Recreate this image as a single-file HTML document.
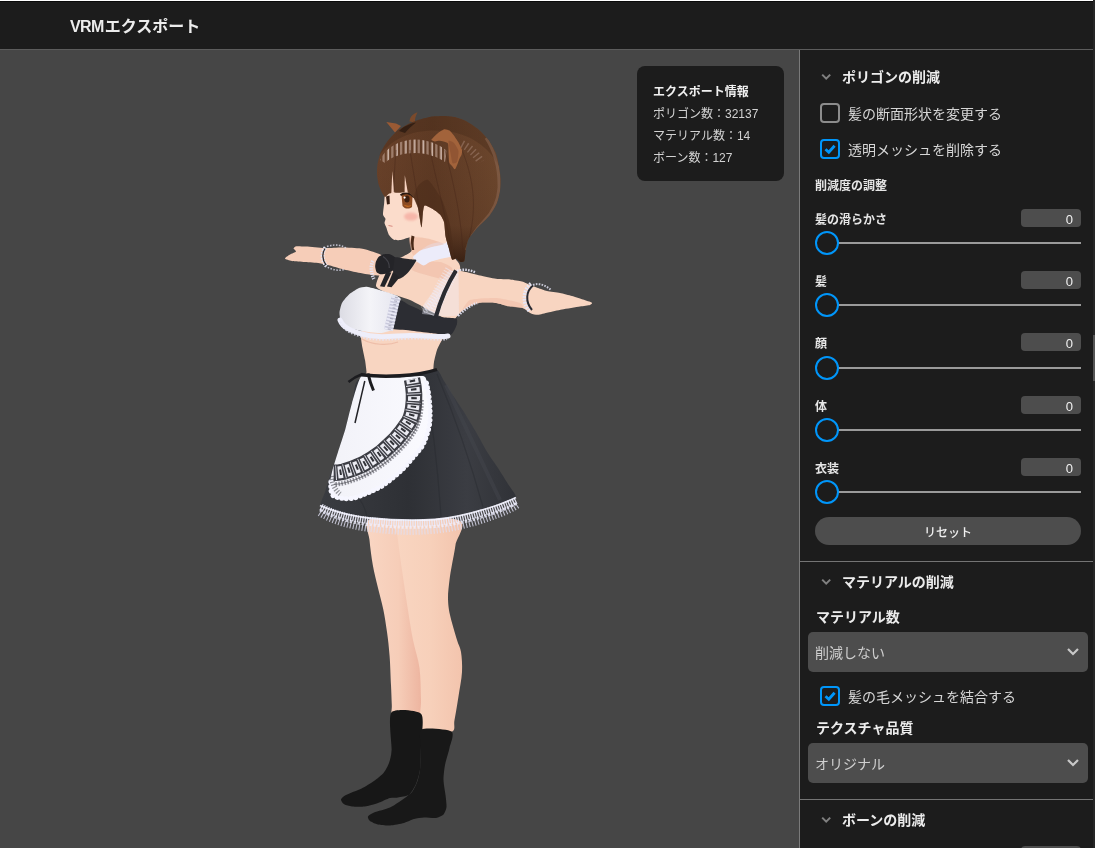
<!DOCTYPE html>
<html lang="ja">
<head>
<meta charset="utf-8">
<title>VRMエクスポート</title>
<style>
*{box-sizing:border-box;margin:0;padding:0}
html,body{width:1095px;height:848px;overflow:hidden;background:#464646}
body{position:relative;will-change:transform;font-family:"Liberation Sans","Noto Sans CJK JP",sans-serif;color:#e6e6e6;-webkit-font-smoothing:antialiased}
.abs{position:absolute}
#topline{left:0;top:0;width:1093px;height:1px;background:#fff}
#topdark{left:0;top:1px;width:1093px;height:1px;background:#0a0a0a}
#header{left:0;top:2px;width:1093px;height:47px;background:#1c1c1c}
#hborder{left:0;top:49px;width:1093px;height:1px;background:#5c5c5c}
#title{left:70px;top:15px;font-size:16px;font-weight:700;line-height:24px;color:#ececec;white-space:nowrap}
#viewport{left:0;top:50px;width:799px;height:798px;background:#464646;overflow:hidden}
#edge{left:1093px;top:0;width:2px;height:848px;background:#262626}
#thumb{left:1093px;top:335px;width:2px;height:46px;background:#555}
#panel{left:799px;top:50px;width:294px;height:798px;background:#1c1c1c;border-left:1px solid #7a7a7a;overflow:hidden}
#info{left:637px;top:66px;width:147px;height:115px;border-radius:8px;background:#1c1c1c;padding:15px 16px;font-size:12px;line-height:22px;color:#d2d2d2;white-space:nowrap}
#info b{color:#f0f0f0;font-weight:700}
/* panel items use page coordinates via absolute children of body */
.sec{font-size:14px;font-weight:700;line-height:20px;color:#ececec;white-space:nowrap}
.chev{width:12px;height:8px}
.cb{width:20px;height:20px;border:2px solid #8c8c8c;border-radius:4px}
.cb.on{border-color:#0096fa}
.lbl{font-size:14px;line-height:20px;color:#d6d6d6;white-space:nowrap}
.h14{font-size:14px;font-weight:700;line-height:20px;color:#ececec;white-space:nowrap}
.h12{font-size:12px;font-weight:700;line-height:18px;color:#e6e6e6;white-space:nowrap}
.val{left:1021px;width:60px;height:18px;border-radius:4px;background:#4d4d4d;font-size:13px;line-height:22px;text-align:right;padding-right:8px;color:#f0f0f0}
.track{left:838px;width:243px;height:2px;background:#9a9a9a}
.knob{left:815px;width:24px;height:24px;border-radius:50%;border:2px solid #0096fa;background:#1c1c1c}
.div{left:800px;width:293px;height:1px;background:#747474}
.dd{left:808px;width:280px;height:40px;border-radius:5px;background:#4d4d4d;font-size:14px;line-height:42px;padding-left:7px;color:#cfcfcf;white-space:nowrap}
#reset{left:815px;top:517px;width:266px;height:28px;border-radius:14px;background:#4d4d4d;font-size:12px;font-weight:500;line-height:32px;text-align:center;color:#f0f0f0}
</style>
</head>
<body>
<div class="abs" id="viewport">
<!--CHARACTER-->
<svg class="abs" style="left:0;top:0;width:799px;height:798px" viewBox="0 50 799 798">
<defs>
<linearGradient id="gHair" x1="0" y1="0" x2="1" y2="0"><stop offset="0" stop-color="#6a422a"/><stop offset=".45" stop-color="#5e3a24"/><stop offset="1" stop-color="#6e482e"/></linearGradient>
<linearGradient id="gHairV" x1="0" y1="0" x2="0" y2="1"><stop offset="0" stop-color="#4a2c1a" stop-opacity=".0"/><stop offset=".75" stop-color="#3a2012" stop-opacity=".15"/><stop offset="1" stop-color="#2a160c" stop-opacity=".75"/></linearGradient>
<linearGradient id="gSkinLeg" x1="0" y1="0" x2="1" y2="0"><stop offset="0" stop-color="#f9d6c2"/><stop offset=".55" stop-color="#f7d0ba"/><stop offset="1" stop-color="#f3c4ad"/></linearGradient>
<linearGradient id="gSkinLegB" x1="0" y1="0" x2="1" y2="0"><stop offset="0" stop-color="#f9d6c3"/><stop offset=".55" stop-color="#f6cdb8"/><stop offset="1" stop-color="#ecb19c"/></linearGradient>
<linearGradient id="gSkirt" x1="0" y1="0" x2="1" y2="0"><stop offset="0" stop-color="#3a3c41"/><stop offset=".45" stop-color="#2e3035"/><stop offset=".75" stop-color="#3b3d43"/><stop offset="1" stop-color="#303237"/></linearGradient>
<linearGradient id="gBra" x1="0" y1="0" x2="1" y2="0"><stop offset="0" stop-color="#dcdce4"/><stop offset=".5" stop-color="#f4f4f8"/><stop offset="1" stop-color="#e4e4ee"/></linearGradient>
<linearGradient id="gApron" x1="0" y1="0" x2="1" y2="0"><stop offset="0" stop-color="#f2f2f8"/><stop offset="1" stop-color="#fafaff"/></linearGradient>
<filter id="fb" filterUnits="userSpaceOnUse" x="360" y="100" width="160" height="100"><feGaussianBlur stdDeviation="0.55"/></filter>
<filter id="fb2" filterUnits="userSpaceOnUse" x="395" y="205" width="35" height="25"><feGaussianBlur stdDeviation="1.2"/></filter>
</defs>
<path d="M368.5 520.0 C363.6 523.3 368.8 532.5 369.5 540.0 C370.2 547.5 371.4 557.0 372.8 565.0 C374.2 573.0 376.3 580.7 378.0 588.0 C379.7 595.3 381.7 601.7 383.2 609.0 C384.7 616.3 385.9 624.2 387.0 632.0 C388.1 639.8 388.9 647.2 389.6 656.0 C390.3 664.8 390.6 676.8 391.0 685.0 C391.4 693.2 391.6 699.8 391.8 705.0 C392.1 710.2 390.3 713.8 392.5 716.0 C394.7 718.2 399.9 717.8 405.0 718.0 C410.1 718.2 419.8 719.2 423.0 717.0 C426.2 714.8 424.0 709.5 424.0 705.0 C424.0 700.5 423.2 696.2 423.0 690.0 C422.8 683.8 423.7 676.3 422.5 668.0 C421.3 659.7 417.9 649.8 416.0 640.0 C414.1 630.2 412.6 620.7 410.8 609.0 C409.0 597.3 406.7 582.2 405.0 570.0 C403.3 557.8 401.4 544.3 400.4 536.0 C399.4 527.7 404.3 522.7 399.0 520.0 C393.7 517.3 373.4 516.7 368.5 520.0Z" fill="url(#gSkinLegB)"/>
<path d="M396.0 520.0 C385.8 522.7 396.4 527.7 397.4 536.0 C398.4 544.3 400.3 557.8 402.0 570.0 C403.7 582.2 406.0 597.3 407.8 609.0 C409.6 620.7 411.1 630.2 413.0 640.0 C414.9 649.8 418.2 658.0 419.5 668.0 C420.8 678.0 420.6 689.5 421.0 700.0 C421.4 710.5 416.7 725.7 421.7 731.0 C426.7 736.3 445.5 733.8 451.0 732.0 C456.5 730.2 453.3 725.8 454.5 720.0 C455.7 714.2 457.1 705.0 458.4 697.0 C459.6 689.0 461.6 679.5 462.0 672.0 C462.4 664.5 461.8 657.3 461.0 652.0 C460.2 646.7 458.8 646.2 457.0 640.0 C455.2 633.8 451.5 622.0 450.0 615.0 C448.5 608.0 448.1 603.8 448.0 598.0 C447.9 592.2 448.9 585.5 449.5 580.0 C450.1 574.5 450.9 570.8 451.9 565.0 C452.9 559.2 454.4 552.5 455.5 545.0 C456.6 537.5 468.3 524.2 458.4 520.0 C448.5 515.8 406.2 517.3 396.0 520.0Z" fill="url(#gSkinLeg)"/>
<path d="M391.4 712.5 C394.9 708.3 417.7 710.2 421.2 714.0 C424.7 717.8 421.1 738.5 421.0 745.0 C420.9 751.5 420.6 765.1 420.0 769.6 C419.4 774.1 417.3 781.1 416.0 784.0 C414.7 786.9 411.1 793.2 409.0 794.8 C406.9 796.4 400.2 797.1 398.0 797.5 C395.8 797.9 392.3 797.4 390.0 798.0 C387.7 798.6 380.9 802.0 378.0 803.0 C375.1 804.0 367.8 806.1 364.8 806.5 C361.8 806.9 354.4 806.8 352.0 806.5 C349.6 806.2 345.5 805.1 344.2 804.3 C342.9 803.5 340.8 800.6 341.0 799.5 C341.2 798.4 343.6 796.3 346.0 795.0 C348.4 793.7 358.3 790.1 361.6 788.5 C364.9 786.9 371.4 782.8 374.0 781.0 C376.6 779.2 381.9 774.8 383.7 772.7 C385.4 770.6 388.1 765.6 389.0 763.0 C389.9 760.4 391.3 755.9 391.6 750.0 C391.9 744.1 387.9 716.7 391.4 712.5Z" fill="#171717"/>
<path d="M421.5 729.5 C425.1 727.3 448.2 729.3 451.5 731.5 C454.8 733.7 450.3 744.1 449.5 748.0 C448.7 751.9 445.7 761.3 445.0 765.0 C444.3 768.7 443.4 776.5 443.5 780.0 C443.6 783.5 445.1 791.9 445.5 795.0 C445.9 798.1 446.7 804.7 446.5 807.0 C446.3 809.3 444.7 813.2 443.5 814.5 C442.3 815.8 438.3 817.6 436.0 818.0 C433.7 818.4 426.6 817.4 424.0 817.5 C421.4 817.6 416.3 818.4 414.0 819.0 C411.7 819.6 406.8 822.2 404.0 823.0 C401.2 823.8 393.0 825.3 390.0 825.5 C387.0 825.7 380.3 825.0 378.0 824.5 C375.7 824.0 371.2 821.9 370.0 821.0 C368.8 820.1 367.5 817.5 368.0 816.5 C368.5 815.5 371.4 813.5 374.0 812.5 C376.6 811.5 386.7 809.0 390.0 807.5 C393.3 806.0 399.4 801.8 402.0 800.0 C404.6 798.2 410.4 793.9 412.2 791.7 C414.0 789.5 416.6 783.6 417.5 781.0 C418.4 778.4 419.6 773.2 420.0 769.6 C420.4 766.0 420.8 754.7 421.0 750.0 C421.2 745.3 417.9 731.7 421.5 729.5Z" fill="#181818"/>
<path d="M361.0 336.0 C360.8 338.2 362.1 345.6 362.5 348.0 C362.9 350.4 364.6 357.6 365.0 360.0 C365.4 362.4 366.4 370.0 366.5 372.0 C366.6 374.0 359.2 379.4 366.0 380.0 C372.8 380.6 427.3 378.9 434.0 378.0 C440.7 377.1 433.4 372.6 433.4 371.0 C433.4 369.4 433.6 364.1 434.0 362.0 C434.4 359.9 436.2 352.2 437.0 350.0 C437.8 347.8 441.0 341.7 442.0 340.0 C443.0 338.3 446.5 334.5 447.0 333.0 C447.5 331.5 451.7 326.1 447.0 325.0 C442.3 323.9 408.2 321.9 400.0 322.0 C391.8 322.1 368.9 324.6 365.0 326.0 C361.1 327.4 361.2 333.8 361.0 336.0Z" fill="#f8d5c1"/>
<path d="M284.9 258.6 C284.7 257.8 288.7 255.3 290.0 254.5 C291.3 253.7 295.6 252.2 296.0 251.5 C296.4 250.8 293.4 249.1 293.5 248.5 C293.6 247.9 295.0 246.5 296.5 246.3 C298.0 246.1 302.7 246.4 306.0 246.6 C309.3 246.8 320.3 248.1 324.5 248.2 C328.7 248.3 337.8 247.6 342.0 247.6 C346.2 247.6 357.4 248.1 360.9 248.6 C364.4 249.1 369.5 250.7 372.0 251.5 C374.5 252.3 380.1 254.0 382.0 255.5 C383.9 257.0 387.6 261.7 388.0 264.0 C388.4 266.3 387.0 273.7 385.0 275.0 C383.0 276.3 374.3 275.2 370.8 274.8 C367.3 274.4 358.5 272.7 355.0 272.0 C351.5 271.3 343.9 269.5 341.0 268.8 C338.1 268.1 332.5 266.3 330.0 265.6 C327.5 264.9 322.5 263.6 319.6 263.2 C316.7 262.8 308.2 262.3 305.0 262.0 C301.8 261.7 294.3 261.4 292.0 261.0 C289.7 260.6 285.1 259.4 284.9 258.6Z" fill="#f6cdb8"/>
<path d="M325.5 247.5 C321.5 252 321.5 260 326.5 266" fill="none" stroke="#e8e8f6" stroke-width="4" stroke-dasharray="1.6 1.1"/>
<path d="M325 248.5 C322 253 322 259.5 326 265" fill="none" stroke="#2a2a30" stroke-width="1.3"/>
<path d="M327 246.5 C336 243.5 343 245.5 347 249" fill="none" stroke="#dcdcee" stroke-width="1.6" stroke-dasharray="1.5 1.5" opacity=".8"/>
<path d="M325 266 C332 270 340 271.5 345 269" fill="none" stroke="#dcdcee" stroke-width="1.6" stroke-dasharray="1.5 1.5" opacity=".8"/>
<path d="M452.0 270.5 C454.0 268.7 463.2 271.5 466.0 272.0 C468.8 272.5 477.0 274.8 480.0 275.5 C483.0 276.2 493.0 278.4 496.0 278.8 C499.0 279.2 507.4 279.2 510.0 279.5 C512.6 279.8 520.1 281.0 522.0 281.5 C523.9 282.0 527.4 283.9 529.0 284.5 C530.6 285.1 536.2 287.4 538.0 288.0 C539.8 288.6 544.8 290.5 547.0 291.0 C549.2 291.5 557.5 292.5 560.0 293.0 C562.5 293.5 569.7 295.4 572.0 296.0 C574.3 296.6 581.0 298.8 583.0 299.5 C585.0 300.2 591.3 302.1 592.0 302.7 C592.7 303.2 591.2 304.6 590.0 305.0 C588.8 305.4 582.8 306.1 580.0 306.5 C577.2 306.9 565.2 308.9 562.0 309.5 C558.8 310.1 550.4 312.0 548.0 312.5 C545.6 313.0 539.7 314.7 538.0 314.8 C536.3 314.9 532.5 314.2 531.0 313.5 C529.5 312.8 524.7 308.7 522.5 308.0 C520.3 307.3 511.6 306.8 509.0 306.3 C506.4 305.8 498.7 303.3 496.0 302.9 C493.3 302.5 484.4 302.3 482.0 302.5 C479.6 302.7 474.0 304.1 472.0 305.0 C470.0 305.9 463.7 309.7 462.0 311.0 C460.3 312.3 456.4 317.5 455.0 318.0 C453.6 318.5 448.9 318.8 448.0 316.0 C447.1 313.2 445.6 294.6 446.0 290.0 C446.4 285.4 450.0 272.3 452.0 270.5Z" fill="#f8d5c1"/>
<path d="M470.0 300.0 C473.4 298.7 491.0 297.7 496.0 298.0 C501.0 298.3 517.4 302.0 520.0 303.0 C522.6 304.0 523.6 307.7 522.5 308.0 C521.4 308.3 511.6 306.8 509.0 306.3 C506.4 305.8 498.7 303.3 496.0 302.9 C493.3 302.5 484.4 302.3 482.0 302.5 C479.6 302.7 474.0 304.1 472.0 305.0 C470.0 305.9 462.2 311.5 462.0 311.0 C461.8 310.5 466.6 301.3 470.0 300.0Z" fill="#f0bca6" opacity=".55"/>
<path d="M409.0 232.0 C409.8 230.4 417.7 233.6 420.0 234.0 C422.3 234.4 429.3 235.6 432.0 236.0 C434.7 236.4 444.7 235.8 447.0 238.0 C449.3 240.2 453.7 255.2 455.0 258.0 C456.3 260.8 459.5 262.8 460.0 266.0 C460.5 269.2 460.5 284.6 460.0 290.0 C459.5 295.4 457.0 317.4 455.0 320.0 C453.0 322.6 444.5 318.0 440.0 316.0 C435.5 314.0 415.5 302.4 410.0 300.0 C404.5 297.6 388.4 293.4 385.0 292.0 C381.6 290.6 376.4 288.0 376.0 286.0 C375.6 284.0 379.4 274.4 381.0 272.0 C382.6 269.6 389.7 263.6 392.0 262.0 C394.3 260.4 402.0 257.2 404.0 256.0 C406.0 254.8 411.5 252.4 412.0 250.0 C412.5 247.6 408.2 233.6 409.0 232.0Z" fill="#f8d5c1"/>
<path d="M418.0 262.0 C420.8 261.2 436.6 261.4 440.0 262.0 C443.4 262.6 451.0 266.2 452.0 268.0 C453.0 269.8 452.2 279.2 450.0 280.0 C447.8 280.8 433.8 277.0 430.0 276.0 C426.2 275.0 413.2 271.4 412.0 270.0 C410.8 268.6 415.2 262.8 418.0 262.0Z" fill="#eeb8a2" opacity=".5"/>
<path d="M339.5 312.5 C339.6 310.7 341.1 304.8 342.0 303.0 C342.9 301.2 347.4 295.9 349.0 294.5 C350.6 293.1 356.3 289.3 358.0 288.5 C359.7 287.7 364.2 286.8 366.0 286.8 C367.8 286.9 373.8 288.4 376.0 289.0 C378.2 289.6 385.9 291.8 388.0 292.5 C390.1 293.2 396.2 295.1 397.5 296.0 C398.8 296.9 401.1 299.0 401.0 301.0 C400.9 303.0 396.9 313.1 396.0 316.0 C395.1 318.9 394.1 327.8 392.5 329.5 C390.9 331.2 383.1 332.9 380.0 333.0 C376.9 333.1 365.3 331.6 362.0 331.0 C358.7 330.4 349.1 328.0 347.0 327.0 C344.9 326.0 341.8 322.4 341.0 321.0 C340.2 319.6 339.4 314.3 339.5 312.5Z" fill="url(#gBra)"/>
<path d="M400.2 300.5 C401.3 299.5 406.7 303.9 408.0 304.5 C409.3 305.1 414.7 307.4 416.0 308.0 C417.3 308.6 422.6 311.2 424.0 311.8 C425.4 312.4 430.9 314.7 432.6 315.2 C434.4 315.7 443.0 317.2 445.0 317.5 C447.0 317.8 455.5 318.0 456.5 318.5 C457.5 319.0 457.2 323.0 457.0 324.0 C456.8 325.0 455.0 329.1 454.5 330.0 C454.0 330.9 452.2 334.1 451.0 334.5 C449.8 334.9 441.8 334.3 440.0 334.2 C438.2 334.1 432.5 333.3 430.0 333.0 C427.5 332.7 413.2 330.9 410.0 330.5 C406.8 330.1 392.3 329.8 391.0 328.6 C389.7 327.4 393.7 318.3 394.5 316.0 C395.3 313.7 399.1 301.5 400.2 300.5Z" fill="#2c2d33"/>
<path d="M396 297 L388.5 330" fill="none" stroke="#c9c9dc" stroke-width="9"/>
<path d="M396 297 L388.5 330" fill="none" stroke="#f2f2fc" stroke-width="9" stroke-dasharray="1.6 1.6" opacity=".8"/>
<path d="M396.5 297 L389 330" fill="none" stroke="#9a9aae" stroke-width="3" stroke-dasharray="1.2 2.4" opacity=".7"/>
<path d="M340 320 C343 328 352 331 362 334 C376 338.5 392 336 410 335.5 C426 335 440 338 448 336" fill="none" stroke="#eeeefa" stroke-width="5" stroke-linecap="round"/>
<path d="M340 322 C344 331 352 334 362 337 C376 341.5 392 339 410 338.5 C426 338 440 341 447 339" fill="none" stroke="#e6e6f6" stroke-width="2" stroke-dasharray="1.6 1.6" opacity=".85"/>
<path d="M362 339 C372 345 388 346 398 342" fill="none" stroke="#e9b49e" stroke-width="1.2" opacity=".7"/>
<path d="M449 270.5 L458.5 271.5 L459 315.5 L446 316.5 L422 314 L424 304 L436 288Z" fill="#eeeefc" opacity=".38"/>
<path d="M452 271 C443 286 436 300 430 316" fill="none" stroke="#f0f0ff" stroke-width="15" stroke-dasharray="1.1 1.7" opacity=".5"/>
<path d="M446 289 C440 298 432 305 423 310" fill="none" stroke="#f0f0ff" stroke-width="8" stroke-dasharray="1.2 1.6" opacity=".5"/>
<path d="M456 270.5 C447.5 284 440.5 300 435.5 318" fill="none" stroke="#2a2b31" stroke-width="4.2"/>
<path d="M457 271 C463 268.5 470 270 476 272.5" fill="none" stroke="#e8e8f8" stroke-width="2.4" stroke-dasharray="1.6 1.2" opacity=".9"/>
<path d="M458 316 C464 310 470 305.5 477 303" fill="none" stroke="#e8e8f8" stroke-width="2.4" stroke-dasharray="1.6 1.2" opacity=".9"/>
<path d="M531.5 284.5 C524 290 523 303 530.5 311" fill="none" stroke="#e6e6f6" stroke-width="5.5" stroke-dasharray="1.6 1.1"/>
<path d="M533 285.5 C526 291 525 302 532 310" fill="none" stroke="#2a2a30" stroke-width="2"/>
<path d="M533 285 C539 282.5 546 285.5 551 290" fill="none" stroke="#dedeee" stroke-width="2" stroke-dasharray="1.6 1.3" opacity=".85"/>
<path d="M413.0 257.0 C413.5 255.9 419.3 251.2 421.0 250.0 C422.7 248.8 427.6 245.4 430.0 244.5 C432.4 243.6 443.1 240.8 445.0 241.0 C446.9 241.2 448.3 245.5 449.0 247.0 C449.7 248.5 452.9 254.8 452.0 256.0 C451.1 257.2 442.2 258.4 440.0 259.0 C437.8 259.6 431.6 261.4 430.0 262.0 C428.4 262.6 425.1 265.6 423.7 265.5 C422.3 265.4 417.1 261.9 416.0 261.0 C414.9 260.1 412.5 258.1 413.0 257.0Z" fill="#ececfa"/>
<path d="M375.8 262.0 C376.1 261.0 377.7 257.8 378.5 257.0 C379.3 256.2 382.4 254.6 383.5 254.3 C384.6 254.0 387.9 253.8 389.0 254.0 C390.1 254.2 393.1 255.8 394.0 256.5 C394.9 257.1 397.6 259.6 397.8 260.5 C398.1 261.4 397.0 265.0 396.5 266.0 C396.0 267.0 393.9 269.8 393.0 270.5 C392.1 271.2 388.2 273.1 387.0 273.5 C385.8 273.9 381.6 274.4 380.5 274.3 C379.4 274.2 377.0 272.7 376.5 272.0 C376.0 271.3 375.3 268.0 375.2 267.0 C375.1 266.0 375.5 263.0 375.8 262.0Z" fill="#242428"/>
<path d="M395.0 257.5 C395.9 257.0 401.5 258.1 403.0 258.3 C404.5 258.5 408.7 259.1 410.0 259.3 C411.3 259.5 416.0 259.3 416.3 260.0 C416.6 260.7 413.8 264.8 413.0 266.0 C412.2 267.2 409.5 270.9 408.5 272.0 C407.5 273.1 404.0 276.3 403.0 277.0 C402.0 277.7 399.4 279.1 398.5 279.0 C397.6 278.9 394.6 276.9 394.0 276.0 C393.4 275.1 393.0 271.3 393.0 270.0 C393.0 268.7 393.8 264.2 394.0 263.0 C394.2 261.8 394.1 258.0 395.0 257.5Z" fill="#28282c"/>
<path d="M386.5 271.5 L391.5 272.5 L384.5 287 L380 286.2Z" fill="#242428"/>
<path d="M393 272 L399.5 277.5 L391.5 287.2 L387 286.5Z" fill="#242428"/>
<path d="M383 256.5 C387 259 389.5 263 389.3 268" fill="none" stroke="#4a4a50" stroke-width="1.2" opacity=".8"/>
<path d="M373 261 C370.5 265 370.8 272 373.8 279" fill="none" stroke="#e6e6f6" stroke-width="3.6" stroke-dasharray="1.4 1.1" opacity=".9"/>
<path d="M386.0 180.0 C384.5 182.0 385.2 189.7 385.0 192.0 C384.8 194.3 384.4 200.7 384.2 203.0 C384.0 205.3 382.9 213.0 383.0 214.6 C383.1 216.2 385.4 218.2 385.5 219.0 C385.6 219.8 384.4 222.1 384.5 223.0 C384.6 223.9 386.1 226.8 386.5 228.0 C386.9 229.2 388.2 233.8 389.0 235.0 C389.8 236.2 392.8 239.3 394.0 239.8 C395.2 240.3 399.5 240.2 401.0 240.0 C402.5 239.8 407.3 237.8 409.0 237.5 C410.7 237.2 415.7 236.2 418.0 236.5 C420.3 236.8 429.2 239.3 432.0 240.0 C434.8 240.7 444.5 244.6 446.0 243.0 C447.5 241.4 447.4 227.6 447.0 224.0 C446.6 220.4 443.1 210.9 442.0 207.0 C440.9 203.1 438.2 188.5 436.0 185.0 C433.8 181.5 423.6 173.3 420.0 172.0 C416.4 170.7 403.4 171.2 400.0 172.0 C396.6 172.8 387.5 178.0 386.0 180.0Z" fill="#fbdccb"/>
<path d="M409.0 238.5 C409.5 236.8 415.9 237.4 418.0 237.5 C420.1 237.6 427.4 238.3 430.0 239.0 C432.6 239.7 443.8 243.2 444.0 244.0 C444.2 244.8 434.4 246.3 432.0 247.0 C429.6 247.7 421.9 249.7 420.0 250.5 C418.1 251.3 414.1 256.2 413.0 255.0 C411.9 253.8 408.5 240.2 409.0 238.5Z" fill="#efb9a3" opacity=".55"/>
<ellipse cx="411" cy="216.6" rx="7" ry="4" fill="#f4a79c" opacity=".7" filter="url(#fb2)"/>
<path d="M401.5 194.5 C404.5 192.8 409.5 193.2 412.5 196.5 L412 207 C409 209.5 404.5 209 402.5 206Z" fill="#8a4a22"/>
<path d="M400.5 195.2 C404.5 192 410.5 192.8 414 197.5" fill="none" stroke="#2a1a12" stroke-width="1.8"/>
<ellipse cx="407" cy="199" rx="2.6" ry="3.6" fill="#3a1e10"/>
<path d="M403.5 204.5 C405.5 207.5 409.5 207.8 411.6 205 C409 206 406 205.8 403.5 204.5Z" fill="#c4691f"/>
<circle cx="404.6" cy="197.6" r="1.1" fill="#fff"/>
<path d="M386 196.5 L389.5 195.5 L389.8 204 L387 204.5Z" fill="#3a2014"/>
<path d="M388.5 225.5 L392.5 226.3" stroke="#d98a80" stroke-width="1" fill="none"/>
<path d="M386.3 122 L395 132.5 L401 126 L396 123.5Z" fill="#9a5a34"/>
<path d="M409.5 121.5 C410 117 412.5 114 417.5 112.3 C415.5 116 414.8 119 415 122.5Z" fill="#7a4a2c"/>
<clipPath id="cHair"><path d="M444.9 115.9 C442.6 115.9 434.5 116.1 432.0 116.5 C429.5 116.9 422.3 118.8 420.0 119.5 C417.7 120.2 411.1 122.6 408.8 123.8 C406.5 125.0 399.2 129.2 397.0 131.0 C394.8 132.8 388.6 139.8 387.0 142.0 C385.4 144.2 381.4 150.8 380.5 153.0 C379.6 155.2 378.0 161.9 377.6 164.0 C377.2 166.1 376.9 172.0 377.0 174.0 C377.1 176.0 378.1 182.2 378.5 184.0 C378.9 185.8 380.9 190.2 381.5 191.5 C382.1 192.8 384.3 196.8 385.0 197.0 C385.7 197.2 387.7 194.4 388.5 194.0 C389.3 193.6 391.9 192.6 393.0 192.5 C394.1 192.4 397.8 192.9 399.0 192.8 C400.2 192.8 403.9 191.9 405.0 192.0 C406.1 192.1 409.1 192.8 410.0 193.5 C410.9 194.2 413.7 197.6 414.5 199.0 C415.3 200.4 417.3 205.2 418.0 208.0 C418.7 210.8 421.0 226.7 421.5 227.3 C422.0 227.9 422.5 216.2 422.8 214.0 C423.1 211.8 423.6 206.1 424.5 205.5 C425.4 204.9 430.4 207.6 432.0 208.5 C433.6 209.4 438.8 213.2 440.0 214.5 C441.2 215.8 443.4 219.8 444.0 222.0 C444.6 224.2 445.1 233.5 445.5 236.0 C445.9 238.5 447.9 244.7 448.5 247.0 C449.1 249.3 451.2 258.4 452.0 259.5 C452.8 260.6 455.2 258.3 456.0 258.5 C456.8 258.7 459.2 261.6 460.0 261.8 C460.8 262.1 463.7 262.1 464.3 261.0 C464.9 259.9 465.2 253.2 465.6 251.0 C466.0 248.8 467.3 241.4 468.5 239.0 C469.7 236.6 475.7 229.6 477.8 227.2 C479.9 224.8 487.7 217.8 489.6 215.4 C491.5 213.0 495.7 206.0 496.7 203.6 C497.7 201.2 499.6 193.5 500.0 191.0 C500.4 188.5 500.7 181.5 500.6 179.0 C500.5 176.5 499.5 168.6 499.0 166.0 C498.5 163.4 496.9 155.6 495.8 153.0 C494.8 150.4 490.2 142.3 488.5 140.0 C486.8 137.7 481.1 131.6 478.8 129.7 C476.6 127.8 468.4 122.3 466.0 121.0 C463.6 119.7 457.1 117.5 455.0 117.0 C452.9 116.5 447.2 116.0 444.9 115.9Z"/></clipPath>
<path d="M444.9 115.9 C442.6 115.9 434.5 116.1 432.0 116.5 C429.5 116.9 422.3 118.8 420.0 119.5 C417.7 120.2 411.1 122.6 408.8 123.8 C406.5 125.0 399.2 129.2 397.0 131.0 C394.8 132.8 388.6 139.8 387.0 142.0 C385.4 144.2 381.4 150.8 380.5 153.0 C379.6 155.2 378.0 161.9 377.6 164.0 C377.2 166.1 376.9 172.0 377.0 174.0 C377.1 176.0 378.1 182.2 378.5 184.0 C378.9 185.8 380.9 190.2 381.5 191.5 C382.1 192.8 384.3 196.8 385.0 197.0 C385.7 197.2 387.7 194.4 388.5 194.0 C389.3 193.6 391.9 192.6 393.0 192.5 C394.1 192.4 397.8 192.9 399.0 192.8 C400.2 192.8 403.9 191.9 405.0 192.0 C406.1 192.1 409.1 192.8 410.0 193.5 C410.9 194.2 413.7 197.6 414.5 199.0 C415.3 200.4 417.3 205.2 418.0 208.0 C418.7 210.8 421.0 226.7 421.5 227.3 C422.0 227.9 422.5 216.2 422.8 214.0 C423.1 211.8 423.6 206.1 424.5 205.5 C425.4 204.9 430.4 207.6 432.0 208.5 C433.6 209.4 438.8 213.2 440.0 214.5 C441.2 215.8 443.4 219.8 444.0 222.0 C444.6 224.2 445.1 233.5 445.5 236.0 C445.9 238.5 447.9 244.7 448.5 247.0 C449.1 249.3 451.2 258.4 452.0 259.5 C452.8 260.6 455.2 258.3 456.0 258.5 C456.8 258.7 459.2 261.6 460.0 261.8 C460.8 262.1 463.7 262.1 464.3 261.0 C464.9 259.9 465.2 253.2 465.6 251.0 C466.0 248.8 467.3 241.4 468.5 239.0 C469.7 236.6 475.7 229.6 477.8 227.2 C479.9 224.8 487.7 217.8 489.6 215.4 C491.5 213.0 495.7 206.0 496.7 203.6 C497.7 201.2 499.6 193.5 500.0 191.0 C500.4 188.5 500.7 181.5 500.6 179.0 C500.5 176.5 499.5 168.6 499.0 166.0 C498.5 163.4 496.9 155.6 495.8 153.0 C494.8 150.4 490.2 142.3 488.5 140.0 C486.8 137.7 481.1 131.6 478.8 129.7 C476.6 127.8 468.4 122.3 466.0 121.0 C463.6 119.7 457.1 117.5 455.0 117.0 C452.9 116.5 447.2 116.0 444.9 115.9Z" fill="url(#gHair)"/>
<path d="M444.9 115.9 C442.6 115.9 434.5 116.1 432.0 116.5 C429.5 116.9 422.3 118.8 420.0 119.5 C417.7 120.2 411.1 122.6 408.8 123.8 C406.5 125.0 399.2 129.2 397.0 131.0 C394.8 132.8 388.6 139.8 387.0 142.0 C385.4 144.2 381.4 150.8 380.5 153.0 C379.6 155.2 378.0 161.9 377.6 164.0 C377.2 166.1 376.9 172.0 377.0 174.0 C377.1 176.0 378.1 182.2 378.5 184.0 C378.9 185.8 380.9 190.2 381.5 191.5 C382.1 192.8 384.3 196.8 385.0 197.0 C385.7 197.2 387.7 194.4 388.5 194.0 C389.3 193.6 391.9 192.6 393.0 192.5 C394.1 192.4 397.8 192.9 399.0 192.8 C400.2 192.8 403.9 191.9 405.0 192.0 C406.1 192.1 409.1 192.8 410.0 193.5 C410.9 194.2 413.7 197.6 414.5 199.0 C415.3 200.4 417.3 205.2 418.0 208.0 C418.7 210.8 421.0 226.7 421.5 227.3 C422.0 227.9 422.5 216.2 422.8 214.0 C423.1 211.8 423.6 206.1 424.5 205.5 C425.4 204.9 430.4 207.6 432.0 208.5 C433.6 209.4 438.8 213.2 440.0 214.5 C441.2 215.8 443.4 219.8 444.0 222.0 C444.6 224.2 445.1 233.5 445.5 236.0 C445.9 238.5 447.9 244.7 448.5 247.0 C449.1 249.3 451.2 258.4 452.0 259.5 C452.8 260.6 455.2 258.3 456.0 258.5 C456.8 258.7 459.2 261.6 460.0 261.8 C460.8 262.1 463.7 262.1 464.3 261.0 C464.9 259.9 465.2 253.2 465.6 251.0 C466.0 248.8 467.3 241.4 468.5 239.0 C469.7 236.6 475.7 229.6 477.8 227.2 C479.9 224.8 487.7 217.8 489.6 215.4 C491.5 213.0 495.7 206.0 496.7 203.6 C497.7 201.2 499.6 193.5 500.0 191.0 C500.4 188.5 500.7 181.5 500.6 179.0 C500.5 176.5 499.5 168.6 499.0 166.0 C498.5 163.4 496.9 155.6 495.8 153.0 C494.8 150.4 490.2 142.3 488.5 140.0 C486.8 137.7 481.1 131.6 478.8 129.7 C476.6 127.8 468.4 122.3 466.0 121.0 C463.6 119.7 457.1 117.5 455.0 117.0 C452.9 116.5 447.2 116.0 444.9 115.9Z" fill="url(#gHairV)"/>
<path d="M414.0 198.0 C414.0 195.8 416.6 187.8 418.0 186.0 C419.4 184.2 425.6 178.6 428.0 180.0 C430.4 181.4 439.8 195.5 442.0 200.0 C444.2 204.5 448.8 219.1 450.0 225.0 C451.2 230.9 454.1 256.8 454.0 259.0 C453.9 261.2 449.4 249.3 448.5 247.0 C447.6 244.7 445.9 238.5 445.5 236.0 C445.1 233.5 444.6 224.2 444.0 222.0 C443.4 219.8 441.2 215.8 440.0 214.5 C438.8 213.2 433.6 209.4 432.0 208.5 C430.4 207.6 425.4 204.9 424.5 205.5 C423.6 206.1 423.1 211.8 422.8 214.0 C422.5 216.2 422.0 227.9 421.5 227.3 C421.0 226.7 418.8 210.9 418.0 208.0 C417.2 205.1 414.0 200.2 414.0 198.0Z" fill="#4a2c1a" opacity=".55"/>
<path d="M392.3 171 L394.3 193.5 L391.3 193.5Z" fill="#f6d2c0"/>
<path d="M404.8 175 L407.8 192.5 L404.6 192.5Z" fill="#f6d2c0"/>
<clipPath id="cBand"><path d="M380 160 C386 147 400 139.5 416 139.5 C428 140 439 144 447 151 L445 162 C437 156.5 427 153.5 416 153 C403 153 392 156 385 163Z"/></clipPath>
<g clip-path="url(#cHair)">
<path d="M376 150 C388 126 420 112 450 116 C476 120 494 140 499 166 C488 146 470 134 446 131 C416 128 392 136 376 160Z" fill="#3e2616" opacity=".32"/>
<g clip-path="url(#cBand)" filter="url(#fb)">
<path d="M378 152 L450 152" fill="none" stroke="#cdb0a2" stroke-width="34" stroke-dasharray="2.3 2.1" opacity=".55"/>
<path d="M379 152 L450 152" fill="none" stroke="#f4e6de" stroke-width="34" stroke-dasharray="1.3 7.5" opacity=".5"/>
</g>
<path d="M462 144 C470 148 476 154 481 162" fill="none" stroke="#b8988a" stroke-width="8" stroke-dasharray="1.4 3" opacity=".4" filter="url(#fb)"/>
</g>
<g clip-path="url(#cHair)">
<path d="M486 138 C495 152 499.5 170 499 188 C498 202 492 213 484 221 C476 229 469 238 466.5 250" fill="none" stroke="#8e6a56" stroke-width="3" opacity=".5"/>
<path d="M399 131 C403 126.5 409 124 416 122.5 C412 126 408 129 405 133Z" fill="#2c1a10" opacity=".8"/>
<path d="M430 150 C436 180 446 215 452 255 M445 150 C454 185 462 220 463 256 M462 150 C474 180 478 210 467 246 M410 150 C412 165 416 185 420 215 M396 150 C395 162 394 176 394 192" fill="none" stroke="#48291a" stroke-width="1" opacity=".45"/>
</g>
<path d="M431.4 139.8 C431.6 139.0 436.2 134.6 437.5 133.5 C438.8 132.4 443.0 129.6 444.2 129.3 C445.4 129.0 448.6 130.0 449.5 130.5 C450.4 131.0 452.2 133.3 453.1 134.4 C454.0 135.5 457.1 140.0 458.0 141.5 C458.9 143.0 461.6 148.5 462.0 149.8 C462.4 151.2 461.8 154.1 461.5 155.0 C461.2 155.9 459.9 157.8 459.5 158.7 C459.1 159.6 457.9 162.9 457.5 164.0 C457.1 165.1 455.6 169.1 455.0 169.3 C454.4 169.5 452.6 166.7 452.0 166.0 C451.4 165.3 449.6 163.8 449.3 162.5 C449.0 161.2 448.7 154.9 448.6 153.0 C448.5 151.1 448.5 144.8 448.0 143.6 C447.5 142.4 444.4 141.8 443.5 141.5 C442.6 141.2 439.9 140.8 439.0 140.8 C438.1 140.8 435.8 141.6 435.0 141.5 C434.2 141.4 431.1 140.6 431.4 139.8Z" fill="#a2633b"/>
<path d="M448.5 141.0 C448.9 140.0 453.0 142.0 454.0 143.0 C455.0 144.0 458.2 149.1 458.5 151.0 C458.8 152.9 457.6 160.8 457.0 162.0 C456.4 163.2 453.1 163.9 452.5 163.0 C451.9 162.1 450.9 155.2 450.5 153.0 C450.1 150.8 448.1 142.0 448.5 141.0Z" fill="#8a5030" opacity=".7"/>
<path d="M411.5 235.5 C410.5 241 411 246 412.2 250 L414.2 250 C413.2 245 413.6 240 414.5 236.5Z" fill="#4a2a18"/>
<path d="M358.0 380.0 C354.3 382.1 354.3 393.1 353.0 398.0 C351.7 402.9 346.9 423.3 345.3 429.0 C343.7 434.7 338.5 450.5 337.0 455.0 C335.5 459.5 331.7 470.3 330.5 474.0 C329.3 477.7 326.0 488.8 325.0 492.0 C324.0 495.2 319.5 504.0 320.5 506.0 C321.5 508.0 331.9 511.0 335.0 512.0 C338.1 513.0 348.6 515.4 352.0 516.0 C355.4 516.6 364.4 517.6 368.7 518.0 C373.0 518.4 390.8 519.8 395.0 520.0 C399.2 520.2 407.0 520.6 411.0 520.5 C415.0 520.4 430.8 519.4 435.0 519.0 C439.2 518.6 449.5 517.2 453.5 516.5 C457.5 515.8 470.9 512.6 475.0 511.5 C479.1 510.4 490.9 506.4 495.0 505.0 C499.1 503.6 514.7 500.1 516.0 498.0 C517.3 495.9 509.8 487.0 508.0 484.0 C506.2 481.0 500.1 471.1 498.0 468.0 C495.9 464.9 489.7 456.2 487.5 452.6 C485.3 449.0 478.4 436.1 476.0 432.0 C473.6 427.9 466.4 415.8 464.0 412.0 C461.6 408.2 454.0 397.1 452.0 394.0 C450.0 390.9 445.5 383.4 444.0 381.0 C442.5 378.6 439.4 370.7 437.0 370.0 C434.6 369.3 424.7 373.3 420.0 374.0 C415.3 374.7 396.2 376.4 390.0 377.0 C383.8 377.6 361.7 377.9 358.0 380.0Z" fill="url(#gSkirt)"/>
<path d="M437 374 C452 410 470 460 483 507 M425 380 C432 420 438 470 441 517 M360 500 C364 505 366 512 367 517" fill="none" stroke="#26272c" stroke-width="1.2" opacity=".4"/>
<path d="M446 385 C462 420 482 462 500 500" fill="none" stroke="#45474e" stroke-width="4" opacity=".45"/>
<path d="M321 507 C335 514.5 352 518.5 368.7 520.5 C395 523.5 411 524 435 522.5 C453.5 521 475 515.5 495 509 C505 505.5 512 502.5 516 500.5" fill="none" stroke="#e8e8f8" stroke-width="7" stroke-dasharray="1.3 1.1" opacity=".95"/>
<path d="M319.5 513 C333 521.5 350 526 368 528.5 C395 532 411 532.5 435 530.5 C455 528.5 476 523 496 515.5 C506 512 514 508 518 505" fill="none" stroke="#dedef2" stroke-width="6.5" stroke-dasharray="1.1 1.9" opacity=".8"/>
<path d="M320 510 C334 518 351 522.5 368.5 524.5 C395 527.5 411 528 435 526.5 C454 525 475.5 519.5 495.5 512.5 C505.5 509 513 505.5 517 503" fill="none" stroke="#f0f0ff" stroke-width="3" stroke-dasharray="2.3 1.7" opacity=".8"/>
<path d="M320 505.5 C335 512 352 516 368.7 518 C395 520.5 411 521 435 519.5 C453.5 518 475 512.5 495 506 C505 502.5 512 499.5 516 497.5" fill="none" stroke="#f4f4ff" stroke-width="1.8" opacity=".9"/>
<path d="M361.5 376.0 C364.3 373.4 376.1 377.4 380.0 377.5 C383.9 377.6 395.6 377.6 400.0 377.5 C404.4 377.4 421.1 375.6 423.8 376.2 C426.5 376.8 426.4 381.1 427.0 383.0 C427.6 384.9 429.1 392.5 429.5 395.0 C429.9 397.5 430.4 405.4 430.5 408.0 C430.6 410.6 430.2 418.4 430.0 421.0 C429.8 423.6 428.7 431.1 428.0 433.5 C427.3 435.9 424.3 442.9 423.0 445.0 C421.7 447.1 417.0 452.6 415.3 454.7 C413.6 456.8 407.9 463.9 406.0 466.0 C404.1 468.1 398.5 474.1 396.2 476.0 C393.9 477.9 385.8 483.8 383.0 485.5 C380.2 487.2 371.4 491.8 368.7 493.0 C366.0 494.2 358.6 496.9 356.0 497.5 C353.4 498.1 345.4 499.6 343.2 499.5 C341.0 499.4 335.3 497.4 334.0 496.5 C332.7 495.6 330.7 492.4 330.3 490.8 C329.9 489.2 330.3 482.1 330.5 480.0 C330.7 477.9 331.9 472.4 332.6 469.6 C333.4 466.8 336.7 456.0 338.0 452.0 C339.3 448.0 343.9 434.2 345.3 429.3 C346.7 424.4 350.4 408.3 352.0 403.0 C353.6 397.7 358.7 378.6 361.5 376.0Z" fill="url(#gApron)"/>
<path d="M426.5 383 C429.5 395 430.5 408 430 421 C429.5 427 428 433.5 423 445 C420 450 415.3 454.7 406 466 C402 470 396.2 476 383 485.5 C378 488.5 368.7 493 356 497.5 C351 499 343.2 499.5 334 496.5 C331 494 330.3 490.8 331 478" fill="none" stroke="#f6f6ff" stroke-width="5" stroke-dasharray="0.1 4.6" stroke-linecap="round"/>
<path d="M412 379 C414.5 390 414.5 400 413.2 408 C412 416 410 421 406.8 425 C403.5 430 400 434.5 396.2 438.8 C391.5 443.5 386.5 448 381.4 452.6 C375.5 457 369.5 461 363.3 464.3 C356.5 467.5 350 470 343.2 471.7 C340 472.4 337 472.8 333.5 472.8" fill="none" stroke="#3c3d44" stroke-width="16.5"/>
<path d="M412 379 C414.5 390 414.5 400 413.2 408 C412 416 410 421 406.8 425 C403.5 430 400 434.5 396.2 438.8 C391.5 443.5 386.5 448 381.4 452.6 C375.5 457 369.5 461 363.3 464.3 C356.5 467.5 350 470 343.2 471.7 C340 472.4 337 472.8 333.5 472.8" fill="none" stroke="#f4f4fc" stroke-width="12" stroke-dasharray="4.6 4" opacity=".95"/>
<path d="M412 379 C414.5 390 414.5 400 413.2 408 C412 416 410 421 406.8 425 C403.5 430 400 434.5 396.2 438.8 C391.5 443.5 386.5 448 381.4 452.6 C375.5 457 369.5 461 363.3 464.3 C356.5 467.5 350 470 343.2 471.7 C340 472.4 337 472.8 333.5 472.8" fill="none" stroke="#303137" stroke-width="5.5" stroke-dasharray="2 6.6" stroke-dashoffset="-0.9"/>
<path d="M412 379 C414.5 390 414.5 400 413.2 408 C412 416 410 421 406.8 425 C403.5 430 400 434.5 396.2 438.8 C391.5 443.5 386.5 448 381.4 452.6 C375.5 457 369.5 461 363.3 464.3 C356.5 467.5 350 470 343.2 471.7 C340 472.4 337 472.8 333.5 472.8" fill="none" stroke="#f2f2fb" stroke-width="14.5" stroke-dasharray=".9 7.7" stroke-dashoffset="-6" opacity=".9"/>
<path d="M421.5 400 C421.5 412 419.5 421.5 415.8 429 C412.5 435 408.5 440.5 403.7 445.8 C398.5 451.5 393 456.5 387.4 461.1 C381 466 374.5 470.5 367.3 474.3 C360 478 352.5 481 345.2 482.7 C341 483.8 337.5 484.3 334 484.3" fill="none" stroke="#50515a" stroke-width="4.6" stroke-dasharray="1.5 1.5" opacity=".62"/>
<path d="M421.5 400 C421.5 412 419.5 421.5 415.8 429 C412.5 435 408.5 440.5 403.7 445.8 C398.5 451.5 393 456.5 387.4 461.1 C381 466 374.5 470.5 367.3 474.3 C360 478 352.5 481 345.2 482.7 C341 483.8 337.5 484.3 334 484.3" fill="none" stroke="#3c3d44" stroke-width="1.1" opacity=".55"/>
<path d="M331.5 476 C332 484 335 490 340 494" fill="none" stroke="#4a4b52" stroke-width="5" stroke-dasharray="1.2 1.6" opacity=".6"/>
<path d="M361 374.8 C385 377.5 415 376.5 437 369.5" fill="none" stroke="#1c1c1f" stroke-width="3.4"/>
<path d="M362.5 374 C357 376 352 379 348.5 382" fill="none" stroke="#1c1c1f" stroke-width="2.6"/>
<path d="M368 373.5 C369.5 380 371.5 386 373.5 390.5" fill="none" stroke="#1c1c1f" stroke-width="3"/>
<path d="M364.8 381 C361.5 395 358 410 355 423" fill="none" stroke="#222226" stroke-width="1.5"/>
</svg>
<!--/CHARACTER-->
</div>
<div class="abs" id="topline"></div>
<div class="abs" id="topdark"></div>
<div class="abs" id="header"></div>
<div class="abs" id="hborder"></div>
<div class="abs" id="title"><span style="letter-spacing:-0.6px">VR</span>M<span style="margin-left:0.4px">エクスポート</span></div>
<div class="abs" id="info"><b>エクスポート情報</b><br>ポリゴン数：32137<br>マテリアル数：14<br>ボーン数：127</div>
<div class="abs" id="panel"></div>
<div class="abs" id="edge"></div>
<div class="abs" id="thumb"></div>

<!-- section 1 -->
<svg class="abs chev" style="left:820px;top:73px" viewBox="0 0 12 8"><path d="M2.2 1.6 L6.2 5.6 L10.2 1.6" fill="none" stroke="#808080" stroke-width="2"/></svg>
<div class="abs sec" style="left:842px;top:67px">ポリゴンの削減</div>

<div class="abs cb" style="left:820px;top:103px"></div>
<div class="abs lbl" style="left:848px;top:104px">髪の断面形状を変更する</div>

<div class="abs cb on" style="left:820px;top:139px"></div>
<svg class="abs" style="left:820px;top:139px;width:20px;height:20px" viewBox="0 0 20 20"><path d="M5.5 10.2 L8.8 13.2 L14.6 6.8" fill="none" stroke="#0096fa" stroke-width="2.9"/></svg>
<div class="abs lbl" style="left:848px;top:140px">透明メッシュを削除する</div>

<div class="abs h12" style="left:815px;top:177px">削減度の調整</div>

<div class="abs h12" style="left:815px;top:211px">髪の滑らかさ</div>
<div class="abs val" style="top:209px">0</div>
<div class="abs track" style="top:242px"></div>
<div class="abs knob" style="top:231px"></div>

<div class="abs h12" style="left:815px;top:273px">髪</div>
<div class="abs val" style="top:271px">0</div>
<div class="abs track" style="top:304px"></div>
<div class="abs knob" style="top:293px"></div>

<div class="abs h12" style="left:815px;top:335px">顔</div>
<div class="abs val" style="top:333px">0</div>
<div class="abs track" style="top:367px"></div>
<div class="abs knob" style="top:356px"></div>

<div class="abs h12" style="left:815px;top:398px">体</div>
<div class="abs val" style="top:396px">0</div>
<div class="abs track" style="top:429px"></div>
<div class="abs knob" style="top:418px"></div>

<div class="abs h12" style="left:815px;top:460px">衣装</div>
<div class="abs val" style="top:458px">0</div>
<div class="abs track" style="top:491px"></div>
<div class="abs knob" style="top:480px"></div>

<div class="abs" id="reset">リセット</div>

<!-- section 2 -->
<div class="abs div" style="top:561px"></div>
<svg class="abs chev" style="left:820px;top:578px" viewBox="0 0 12 8"><path d="M2.2 1.6 L6.2 5.6 L10.2 1.6" fill="none" stroke="#808080" stroke-width="2"/></svg>
<div class="abs sec" style="left:842px;top:572px">マテリアルの削減</div>
<div class="abs h14" style="left:816px;top:607px">マテリアル数</div>
<div class="abs dd" style="top:632px">削減しない</div>
<svg class="abs" style="left:1066px;top:647px;width:14px;height:10px" viewBox="0 0 14 10"><path d="M2 2 L7 7 L12 2" fill="none" stroke="#c8c8c8" stroke-width="2.2"/></svg>

<div class="abs cb on" style="left:820px;top:686px"></div>
<svg class="abs" style="left:820px;top:686px;width:20px;height:20px" viewBox="0 0 20 20"><path d="M5.5 10.2 L8.8 13.2 L14.6 6.8" fill="none" stroke="#0096fa" stroke-width="2.9"/></svg>
<div class="abs lbl" style="left:848px;top:687px">髪の毛メッシュを結合する</div>

<div class="abs h14" style="left:816px;top:718px">テクスチャ品質</div>
<div class="abs dd" style="top:743px">オリジナル</div>
<svg class="abs" style="left:1066px;top:758px;width:14px;height:10px" viewBox="0 0 14 10"><path d="M2 2 L7 7 L12 2" fill="none" stroke="#c8c8c8" stroke-width="2.2"/></svg>

<!-- section 3 -->
<div class="abs div" style="top:799px"></div>
<svg class="abs chev" style="left:820px;top:816px" viewBox="0 0 12 8"><path d="M2.2 1.6 L6.2 5.6 L10.2 1.6" fill="none" stroke="#808080" stroke-width="2"/></svg>
<div class="abs sec" style="left:842px;top:810px">ボーンの削減</div>
<div class="abs val" style="top:846px"></div>
</body>
</html>
